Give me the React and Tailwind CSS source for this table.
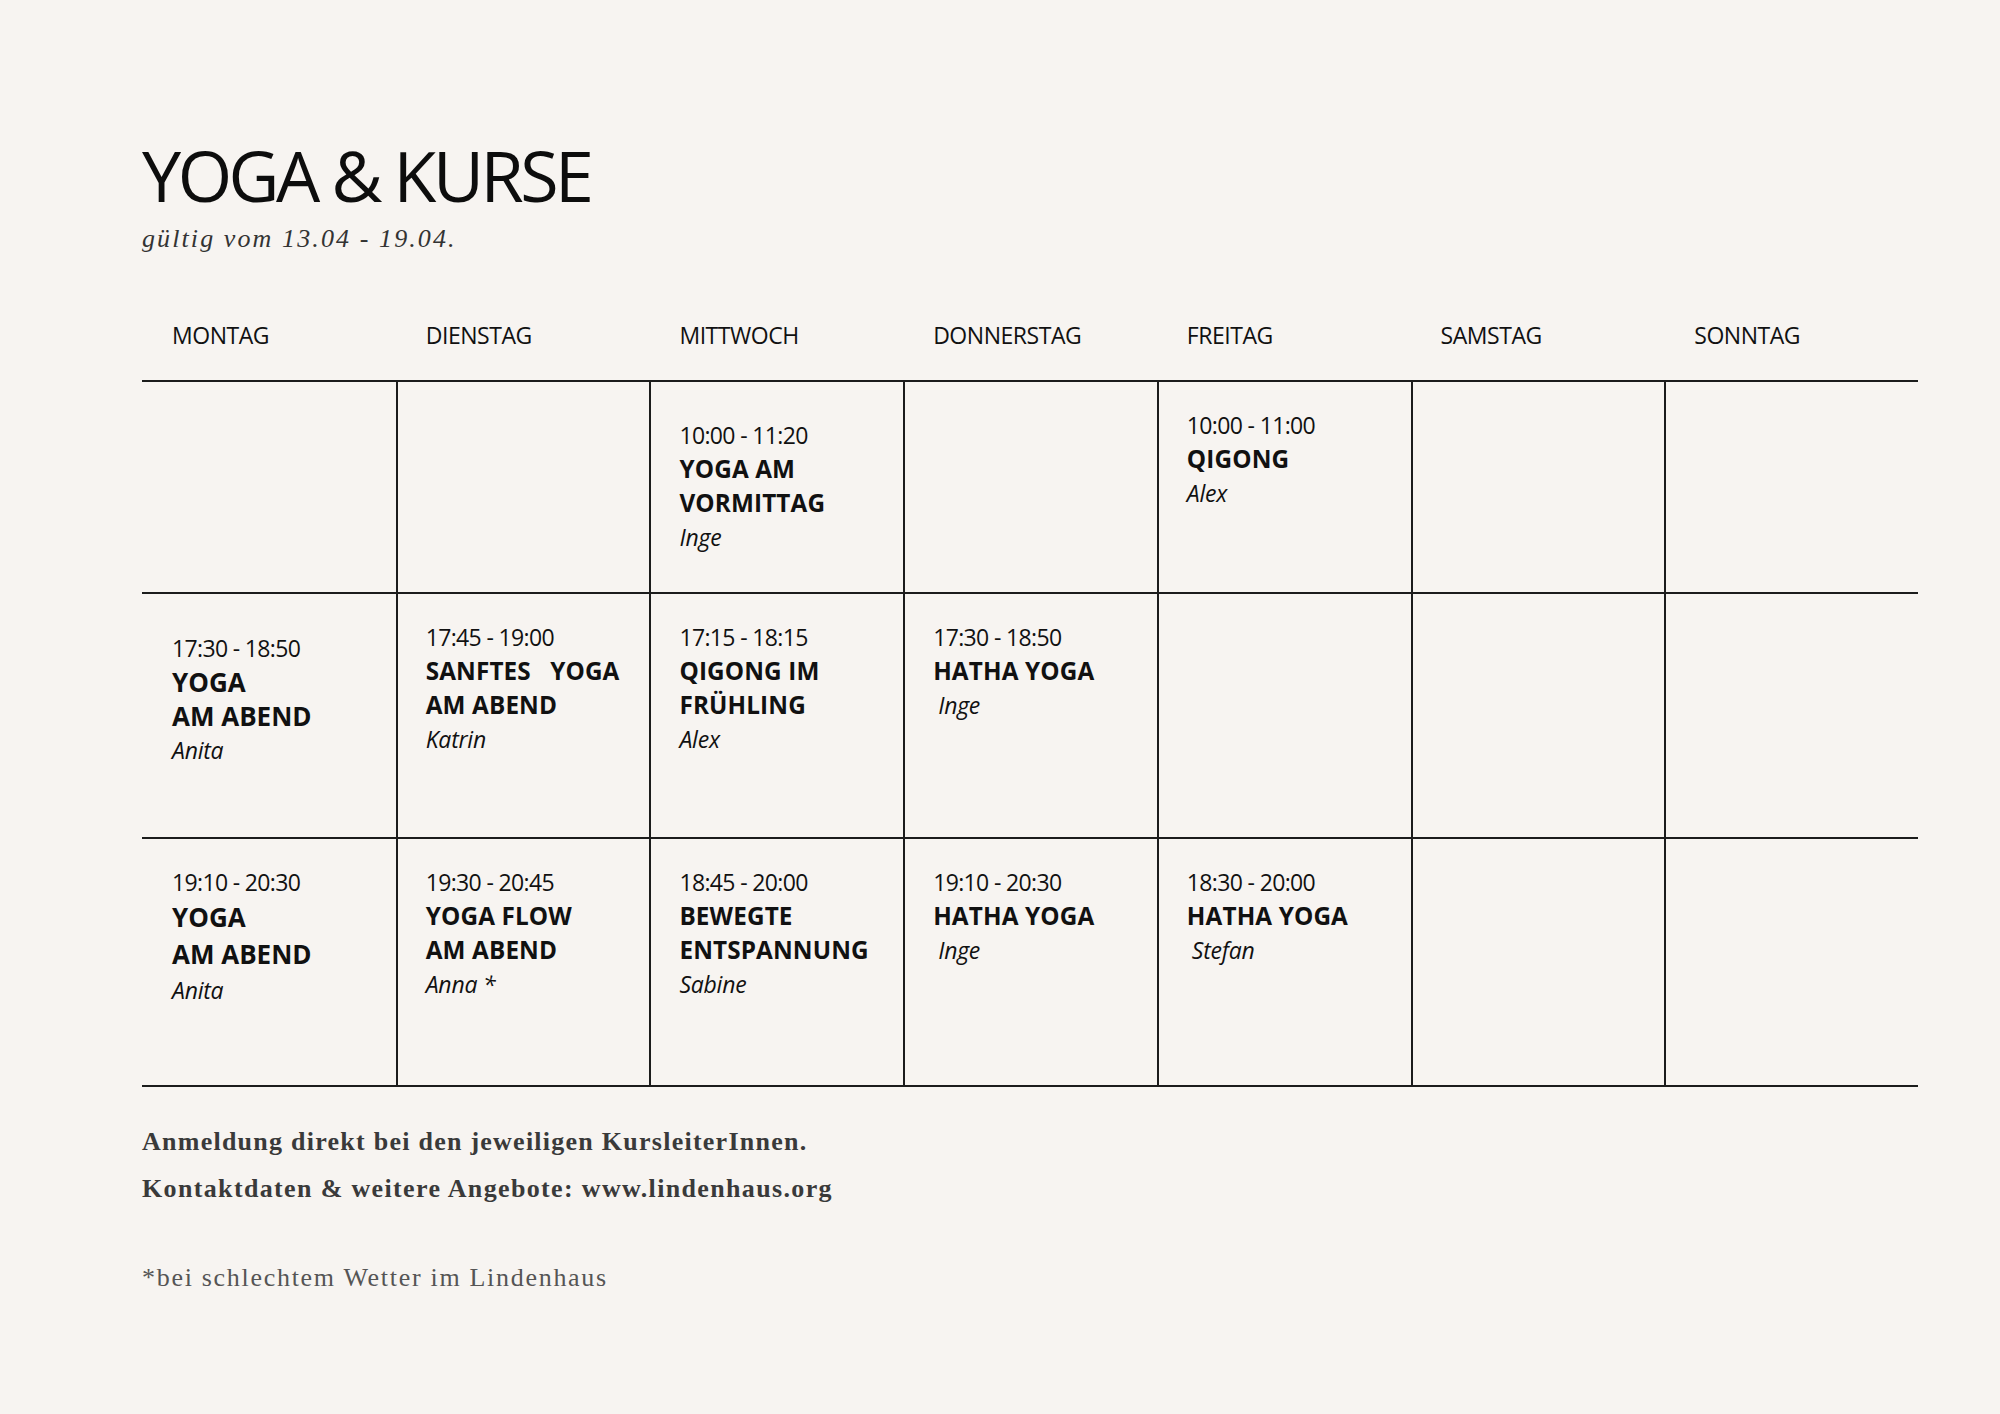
const days = ["MONTAG", "DIENSTAG", "MITTWOCH", "DONNERSTAG", "FREITAG", "SAMSTAG", "SONNTAG"];

// pt = padding above the first line of a cell, lead = line height of the bold lines
const rows = [
  {
    h: "h-[212px]",
    cells: [
      null,
      null,
      { pt: "pt-[36px]", time: "10:00 - 11:20", title: ["YOGA AM", "VORMITTAG"], name: "Inge" },
      null,
      { pt: "pt-[26px]", time: "10:00 - 11:00", title: ["QIGONG"], name: "Alex" },
      null,
      null,
    ],
  },
  {
    h: "h-[245px]",
    cells: [
      { pt: "pt-[37px]", time: "17:30 - 18:50", title: ["YOGA", "AM ABEND"], name: "Anita", big: "leading-[34px]" },
      { pt: "pt-[26px]", time: "17:45 - 19:00", title: ["SANFTES   YOGA", "AM ABEND"], name: "Katrin" },
      { pt: "pt-[26px]", time: "17:15 - 18:15", title: ["QIGONG IM", "FRÜHLING"], name: "Alex" },
      { pt: "pt-[26px]", time: "17:30 - 18:50", title: ["HATHA YOGA"], name: "Inge", indent: true },
      null,
      null,
      null,
    ],
  },
  {
    h: "h-[248px]",
    cells: [
      { pt: "pt-[26px]", time: "19:10 - 20:30", title: ["YOGA", "AM ABEND"], name: "Anita", big: "leading-[37px]" },
      { pt: "pt-[26px]", time: "19:30 - 20:45", title: ["YOGA FLOW", "AM ABEND"], name: "Anna *" },
      { pt: "pt-[26px]", time: "18:45 - 20:00", title: ["BEWEGTE", "ENTSPANNUNG"], name: "Sabine" },
      { pt: "pt-[26px]", time: "19:10 - 20:30", title: ["HATHA YOGA"], name: "Inge", indent: true },
      { pt: "pt-[26px]", time: "18:30 - 20:00", title: ["HATHA YOGA"], name: "Stefan", indent: true },
      null,
      null,
    ],
  },
];

function Cell({ c, first }) {
  return (
    <div className={`${first ? "pl-[30px]" : "border-l-2 border-[#1c1c1c] pl-[28px]"} ${c ? c.pt : ""}`}>
      {c && (
        <div className="text-[#111]">
          <div className="text-[23px] leading-[34px] tracking-[-0.028em]">{c.time}</div>
          {c.title.map((t) => (
            <div
              key={t}
              className={
                c.big
                  ? `whitespace-pre text-[26px] font-bold tracking-[0em] ${c.big}`
                  : "whitespace-pre text-[24.3px] font-bold leading-[34px] tracking-[0.005em]"
              }
            >
              {t}
            </div>
          ))}
          <div className={`text-[23px] italic leading-[34px] tracking-[-0.01em] ${c.indent ? "pl-[5px]" : ""}`}>
            {c.name}
          </div>
        </div>
      )}
    </div>
  );
}

export default function App() {
  return (
    <div className="min-h-screen bg-[#f7f4f1] pl-[142px] pt-[140px] font-['Open_Sans',sans-serif]">
      <div className="w-[1776px]">

        {/* Titel */}
        <h1 className="text-[70px] leading-[70px] tracking-[-0.05em] text-[#0d0d0d]">YOGA &amp; KURSE</h1>
        <p className="mt-[14px] font-['Liberation_Serif',serif] text-[26px] italic leading-[30px] tracking-[2.1px] text-[#333]">
          gültig vom 13.04 - 19.04.
        </p>

        {/* Wochentage */}
        <div className="mt-[63px] grid h-[63px] grid-cols-7 pt-[1px]">
          {days.map((d) => (
            <div key={d} className="pl-[30px] text-[23px] leading-[34px] tracking-[-0.02em] text-[#111]">
              {d}
            </div>
          ))}
        </div>

        {/* Tabelle */}
        <div className="border-t-2 border-[#1c1c1c]">
          {rows.map((r, i) => (
            <div key={i} className={`grid grid-cols-7 border-b-2 border-[#1c1c1c] ${r.h}`}>
              {r.cells.map((c, j) => (
                <Cell key={j} c={c} first={j === 0} />
              ))}
            </div>
          ))}
        </div>

        {/* Hinweise */}
        <div className="mt-[31px] font-['Liberation_Serif',serif] text-[26px] leading-[47px]">
          <p className="font-bold tracking-[1.25px] text-[#3a3a3a]">Anmeldung direkt bei den jeweiligen KursleiterInnen.</p>
          <p className="font-bold tracking-[1.35px] text-[#3a3a3a]">Kontaktdaten &amp; weitere Angebote: www.lindenhaus.org</p>
          <p className="mt-[42px] tracking-[1.7px] text-[#555]">*bei schlechtem Wetter im Lindenhaus</p>
        </div>
      </div>
    </div>
  );
}
